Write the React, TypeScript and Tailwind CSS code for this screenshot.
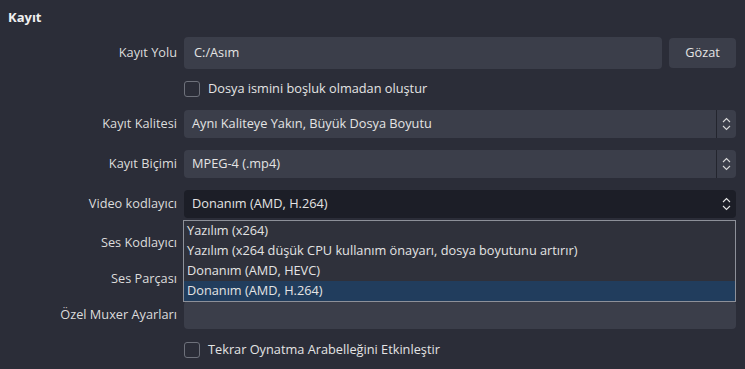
import type { ReactNode } from "react";

const font = { fontFamily: '"Open Sans", "Noto Sans", sans-serif' };

function Chevrons({ light }: { light?: boolean }) {
  return (
    <svg width="9" height="14" viewBox="0 0 9 14" fill="none">
      <path d="M1 5 L4.5 1.5 L8 5" stroke={light ? "#e4e4e4" : "#d8d8d8"} strokeWidth="1.1" />
      <path d="M1 9 L4.5 12.5 L8 9" stroke={light ? "#e4e4e4" : "#d8d8d8"} strokeWidth="1.1" />
    </svg>
  );
}

function Row({ label, className, children }: { label: string; className: string; children: ReactNode }) {
  return (
    <div className={`flex items-center ${className}`}>
      <div className="w-[177px] shrink-0 text-right text-[12.75px] text-[#dcdcdc]">{label}</div>
      <div className="ml-[7px] flex h-full min-w-0 flex-1 items-center">{children}</div>
    </div>
  );
}

function Select({ value }: { value: string }) {
  return (
    <div className="flex h-full w-full items-stretch rounded-[4px] bg-[#3b3e4a]">
      <div className="flex flex-1 items-center pl-[8px] text-[12.75px] text-[#e4e4e4]">{value}</div>
      <div className="w-px bg-[#23252e]" />
      <div className="flex w-[19px] items-center justify-center">
        <Chevrons />
      </div>
    </div>
  );
}

function Checkbox({ label }: { label: string }) {
  return (
    <div className="flex items-center gap-[8px]">
      <div className="h-[16px] w-[16px] rounded-[3px] border border-[#6e717b] bg-[#2b2d38]" />
      <span className="text-[12.75px] text-[#e4e4e4]">{label}</span>
    </div>
  );
}

const options = [
  "Yazılım (x264)",
  "Yazılım (x264 düşük CPU kullanım önayarı, dosya boyutunu artırır)",
  "Donanım (AMD, HEVC)",
  "Donanım (AMD, H.264)",
];

export default function App() {
  return (
    <div className="relative h-[369px] w-[745px] overflow-hidden bg-[#2b2d38] pr-[9px]" style={font}>
      <div className="flex h-[37px] items-center pb-[1px] pl-[8px] text-[13px] font-bold text-[#f0f0f0]">
        Kayıt
      </div>

      <Row label="Kayıt Yolu" className="h-[32px]">
        <div className="flex h-full flex-1 items-center rounded-[4px] bg-[#3b3e4a] pl-[10px] text-[12.75px] text-[#e4e4e4]">
          C:/Asım
        </div>
        <div className="ml-[7px] flex h-[30px] w-[67px] items-center justify-center rounded-[4px] bg-[#3b3e4a] text-[12.75px] text-[#e4e4e4]">
          Gözat
        </div>
      </Row>

      <div className="mt-[10px] flex h-[20px] items-center pl-[184px]">
        <Checkbox label="Dosya ismini boşluk olmadan oluştur" />
      </div>

      <Row label="Kayıt Kalitesi" className="mt-[11px] h-[28px]">
        <Select value="Aynı Kaliteye Yakın, Büyük Dosya Boyutu" />
      </Row>

      <Row label="Kayıt Biçimi" className="mt-[12px] h-[28px]">
        <Select value="MPEG-4 (.mp4)" />
      </Row>

      <Row label="Video kodlayıcı" className="mt-[12px] h-[28px]">
        <div className="flex h-full w-full items-center rounded-[4px] bg-[#1c1e27]">
          <div className="flex-1 pl-[8px] text-[12.75px] text-[#e4e4e4]">Donanım (AMD, H.264)</div>
          <div className="flex w-[19px] items-center justify-center">
            <Chevrons light />
          </div>
        </div>
      </Row>

      <Row label="Ses Kodlayıcı" className="mt-[11px] h-[28px]">
        <Select value="" />
      </Row>

      <Row label="Ses Parçası" className="mt-[12px] h-[20px]">
        <div />
      </Row>

      <Row label="Özel Muxer Ayarları" className="mt-[12px] h-[28px]">
        <div className="h-full w-full rounded-[4px] bg-[#3b3e4a]" />
      </Row>

      <div className="mt-[11px] flex h-[20px] items-center pl-[184px]">
        <Checkbox label="Tekrar Oynatma Arabelleğini Etkinleştir" />
      </div>

      {/* open combo list */}
      <div className="absolute left-[183px] top-[220px] w-[553px] border border-[#8d9099] bg-[#2f313b]">
        {options.map((o, i) => (
          <div
            key={o}
            className={`flex h-[20px] items-center pl-[3px] text-[12.75px] text-[#e4e4e4] ${
              i === 3 ? "bg-[#213d5d]" : ""
            }`}
          >
            {o}
          </div>
        ))}
      </div>
    </div>
  );
}
